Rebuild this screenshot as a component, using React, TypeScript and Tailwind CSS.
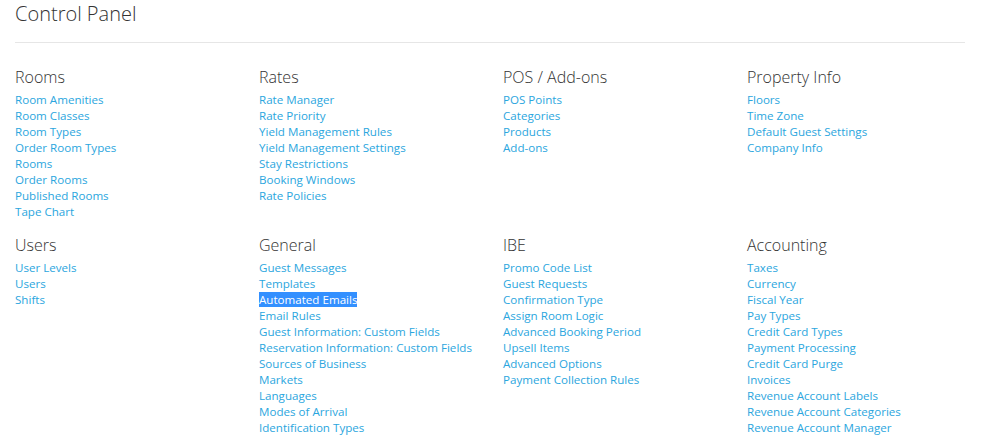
import React from "react";

const sections: { title: string; links: string[] }[][] = [
  [
    {
      title: "Rooms",
      links: [
        "Room Amenities",
        "Room Classes",
        "Room Types",
        "Order Room Types",
        "Rooms",
        "Order Rooms",
        "Published Rooms",
        "Tape Chart",
      ],
    },
    {
      title: "Rates",
      links: [
        "Rate Manager",
        "Rate Priority",
        "Yield Management Rules",
        "Yield Management Settings",
        "Stay Restrictions",
        "Booking Windows",
        "Rate Policies",
      ],
    },
    {
      title: "POS / Add-ons",
      links: ["POS Points", "Categories", "Products", "Add-ons"],
    },
    {
      title: "Property Info",
      links: ["Floors", "Time Zone", "Default Guest Settings", "Company Info"],
    },
  ],
  [
    { title: "Users", links: ["User Levels", "Users", "Shifts"] },
    {
      title: "General",
      links: [
        "Guest Messages",
        "Templates",
        "Automated Emails",
        "Email Rules",
        "Guest Information: Custom Fields",
        "Reservation Information: Custom Fields",
        "Sources of Business",
        "Markets",
        "Languages",
        "Modes of Arrival",
        "Identification Types",
      ],
    },
    {
      title: "IBE",
      links: [
        "Promo Code List",
        "Guest Requests",
        "Confirmation Type",
        "Assign Room Logic",
        "Advanced Booking Period",
        "Upsell Items",
        "Advanced Options",
        "Payment Collection Rules",
      ],
    },
    {
      title: "Accounting",
      links: [
        "Taxes",
        "Currency",
        "Fiscal Year",
        "Pay Types",
        "Credit Card Types",
        "Payment Processing",
        "Credit Card Purge",
        "Invoices",
        "Revenue Account Labels",
        "Revenue Account Categories",
        "Revenue Account Manager",
      ],
    },
  ],
];

export default function App() {
  return (
    <div
      className="w-[989px] h-[438px] overflow-hidden bg-white px-[15px] text-[#333]"
      style={{ fontFamily: "'Open Sans', 'Liberation Sans', sans-serif" }}
    >
      <h1 className="pt-0 text-[20px] leading-[28px] font-light text-[#333]">
        Control Panel
      </h1>
      <div className="mt-[14px] h-px w-[950px] bg-[#e6e6e6]" />
      <div className="pt-[24px] flex flex-col gap-[15px]">
        {sections.map((row, ri) => (
          <div key={ri} className="grid grid-cols-[repeat(4,244px)]">
            {row.map((sec) => (
              <div key={sec.title} className="flex flex-col">
                <h2 className="text-[16px] leading-[20px] font-light text-[#333] mb-[5px]">
                  {sec.title}
                </h2>
                <ul className="flex flex-col">
                  {sec.links.map((l) => (
                    <li key={l} className="text-[11.6px] leading-[16px]">
                      {l === "Automated Emails" ? (
                        <a className="bg-[#3390ff] text-white">{l}</a>
                      ) : (
                        <a className="text-[#2ba6de]">{l}</a>
                      )}
                    </li>
                  ))}
                </ul>
              </div>
            ))}
          </div>
        ))}
      </div>
    </div>
  );
}
